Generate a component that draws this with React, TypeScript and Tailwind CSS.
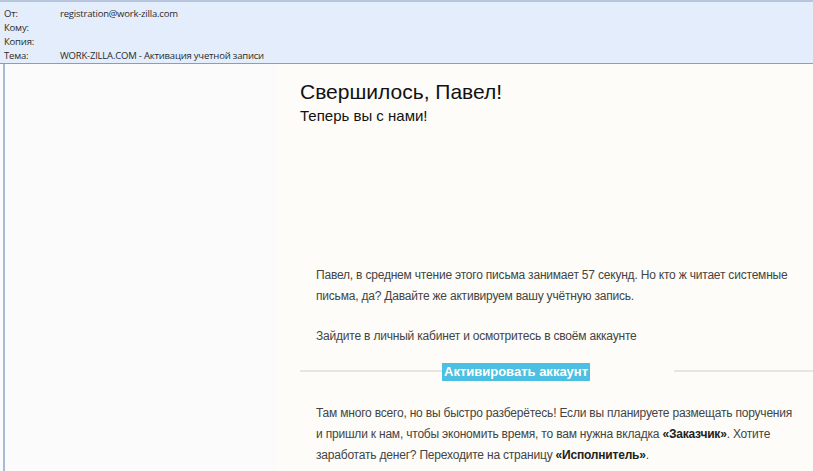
export default function App() {
  return (
    <div className="flex h-[471px] w-[813px] flex-col overflow-hidden bg-[#fbfbfb]">
      {/* Message header */}
      <div className="h-[64px] shrink-0 border-t-2 border-b border-t-[#b7c6dc] border-b-[#8d9db5] bg-[#e3edfc] pt-[5px] font-['Open_Sans',sans-serif] text-[9.5px] leading-[14px] tracking-[-0.2px] text-[#2b2b2b]">
        {[
          ['От:', 'registration@work-zilla.com'],
          ['Кому:', ''],
          ['Копия:', ''],
          ['Тема:', 'WORK-ZILLA.COM - Активация учетной записи'],
        ].map(([label, value]) => (
          <div key={label} className="flex h-[14px] items-center">
            <span className="w-[60px] pl-[4px]">{label}</span>
            <span>{value}</span>
          </div>
        ))}
      </div>

      {/* Message body */}
      <div className="ml-[3px] flex flex-1 border-l-2 border-l-[#a9bbd4]">
        <div className="w-[273px] shrink-0 bg-[#fbfbfb]" />
        <div className="flex-1 bg-[#fdfcf8] font-['Liberation_Sans',Arial,sans-serif]">
          <div className="pl-[22px] pt-[15px]">
            <h1 className="text-[21px] leading-[26px] text-[#111]">Свершилось, Павел!</h1>
            <p className="mt-[2px] text-[15px] leading-[18px] text-[#111]">Теперь вы с нами!</p>
          </div>

          <div className="mt-[140px] pl-[38px] pr-[14px] text-[12px] leading-[21px] tracking-[-0.2px] text-[#444]">
            <p>
              Павел, в среднем чтение этого письма занимает 57 секунд. Но кто ж читает системные
              письма, да? Давайте же активируем вашу учётную запись.
            </p>
            <p className="mt-[19px]">Зайдите в личный кабинет и осмотритесь в своём аккаунте</p>
          </div>

          <div className="mt-[12px] flex items-center pl-[22px]">
            <div className="h-[2px] w-[142px] bg-[#e6e6e2]" />
            <div className="w-[232px]">
              <span className="inline-block bg-[#4bc0e2] px-[2px] text-[13px] font-bold leading-[18px] text-white">
                Активировать аккаунт
              </span>
            </div>
            <div className="h-[2px] flex-1 bg-[#e6e6e2]" />
          </div>

          <div className="mt-[20px] pl-[38px] pr-[14px] text-[12px] leading-[21px] tracking-[-0.2px] text-[#444]">
            <p>
              Там много всего, но вы быстро разберётесь! Если вы планируете размещать поручения
              и пришли к нам, чтобы экономить время, то вам нужна вкладка{' '}
              <b className="text-[#222]">«Заказчик»</b>. Хотите заработать денег? Переходите на
              страницу <b className="text-[#222]">«Исполнитель»</b>.
            </p>
          </div>
        </div>
      </div>
    </div>
  )
}
